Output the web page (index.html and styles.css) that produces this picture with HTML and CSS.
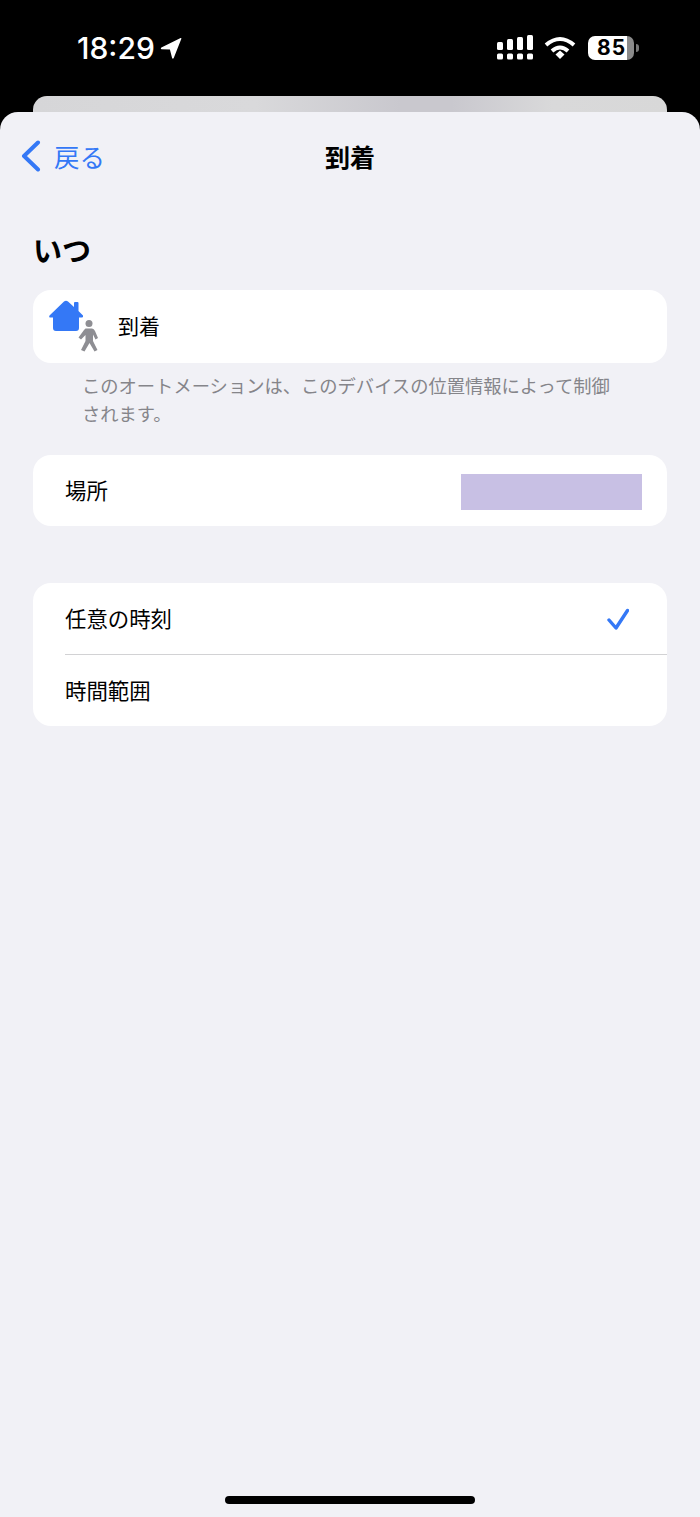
FILE: index.html
```html
<!DOCTYPE html>
<html lang="ja">
<head>
    <meta charset="UTF-8">
    <meta name="viewport" content="width=device-width, initial-scale=1.0">
    <title>到着</title>
    <link rel="stylesheet" href="styles.css">
</head>
<body>
    <!-- Status bar -->
    <div class="status-bar">
        <div class="status-left">
            <span class="clock">18:29</span>
            <svg class="arrow" width="22" height="22" viewBox="0 0 24 24"><path d="M1.5 11.5 L22.5 1.2 Q23.6 .8 23.3 2 L15 23 Q14 24.3 13.2 23 L10.8 13.6 L1.8 13.4 Q.2 12.6 1.5 11.5Z" fill="#fff"/></svg>
        </div>
        <div class="status-right">
            <svg class="signal" width="36" height="25" viewBox="0 0 36 25" fill="#fff">
                <rect x="0" y="7" width="6" height="8" rx="1.5"/>
                <rect x="10" y="4" width="6" height="11" rx="1.5"/>
                <rect x="20" y="2" width="6" height="13" rx="1.5"/>
                <rect x="30" y="0" width="6" height="15" rx="1.5"/>
                <rect x="0" y="18.500" width="6" height="6" rx="1.5"/>
                <rect x="10" y="18.500" width="6" height="6" rx="1.5"/>
                <rect x="20" y="18.500" width="6" height="6" rx="1.5"/>
                <rect x="30" y="18.500" width="6" height="6" rx="1.5"/>
            </svg>
            <svg class="wifi" width="32" height="24" viewBox="0 0 32 24" fill="none" stroke="#fff" stroke-width="4">
                <path d="M2 9 Q16 -3 30 9"/>
                <path d="M8 15 Q16 8 24 15"/>
                <path d="M11.500 18.500 L16 14.500 L20.500 18.500 L16 23Z" fill="#fff" stroke="none"/>
            </svg>
            <div class="battery">
                <div class="battery-body">85</div>
                <div class="battery-tip"></div>
            </div>
        </div>
    </div>

    <div class="sheet-behind"></div>

    <div class="sheet">
        <div class="nav">
            <a class="back">
                <svg width="20" height="32" viewBox="0 0 20 32" fill="none" stroke="#3478f6" stroke-width="4" stroke-linecap="round" stroke-linejoin="round"><path d="M17 2.500 L3 16 L17 29.500"/></svg>
                <span>戻る</span>
            </a>
            <div class="nav-title">到着</div>
        </div>

        <h2 class="section-title">いつ</h2>

        <div class="card arrive-row">
            <svg class="arrive-icon" width="52" height="56" viewBox="0 0 52 56">
                <path d="M1.5 17.500 L16 3.500 Q18 2 20 3.500 L26 9 L26 5 Q26 4 27 4 L29.500 4 Q30.500 4 30.500 5 L30.500 13 L35 17.500 Q35.500 20 33.500 19.500 L31 19.500 L31 30 Q31 33 28 33 L8 33 Q5 33 5 30 L5 19.500 L2.500 19.500 Q.5 19.500 1.500 17.500Z" fill="#3478f6"/>
                <circle cx="41" cy="25.500" r="3.500" fill="#8e8e93"/>
                <path d="M37.500 30.500 L44 30.500 Q46 30.500 47 33 L50 40 L47.500 41.500 L45 36.500 L45 43 L49.500 52 L46.500 53.500 L41.500 45 L36.500 53.500 L33 52 L37.500 43 L37.500 37 L33 41.500 L30.500 39.500 L36 32Z" fill="#8e8e93"/>
            </svg>
            <span>到着</span>
        </div>
        <p class="note">このオートメーションは、このデバイスの位置情報によって制御されます。</p>

        <div class="card row place-row">
            <span>場所</span>
            <div class="redacted"></div>
        </div>

        <div class="card time-card">
            <div class="row time-row">
                <span>任意の時刻</span>
                <svg class="check" width="22" height="22" viewBox="0 0 22 22" fill="none" stroke="#3478f6" stroke-width="3.400" stroke-linecap="round" stroke-linejoin="round"><path d="M2 12 L9 20 L20.500 2.500"/></svg>
            </div>
            <div class="row time-row last">
                <span>時間範囲</span>
            </div>
        </div>

        <div class="home-indicator"></div>
    </div>
</body>
</html>
```

FILE: styles.css
```css
* {
    box-sizing: border-box;
}

html, body {
    margin: 0;
    padding: 0;
}

body {
    width: 700px;
    height: 1517px;
    background-color: #000;
    font-family: "Noto Sans CJK JP", "Liberation Sans", sans-serif;
    color: #000;
    overflow: hidden;
}

.status-bar {
    height: 96px;
    display: flex;
    justify-content: space-between;
    align-items: flex-start;
    padding: 30px 61px 0 77px;
}

.status-left {
    display: flex;
    align-items: center;
    gap: 5px;
}

.clock {
    font-family: Inter, "Liberation Sans", sans-serif;
    font-size: 30px;
    line-height: 36px;
    font-weight: 500;
    color: #fff;
}

.status-right {
    display: flex;
    align-items: center;
    gap: 12px;
    padding-top: 5px;
}

.signal {
    margin-right: -1px;
}

.battery {
    display: flex;
    align-items: center;
    gap: 2px;
}

.battery-body {
    width: 46px;
    height: 24px;
    border-radius: 7px;
    background: linear-gradient(to right, #fff 84%, #8a8a8a 84%);
    color: #000;
    font-family: Inter, "Liberation Sans", sans-serif;
    font-size: 21px;
    font-weight: 700;
    letter-spacing: 1px;
    line-height: 24px;
    padding-left: 9px;
}

.battery-tip {
    width: 3px;
    height: 8px;
    border-radius: 0 3px 3px 0;
    background-color: #777;
}

.sheet-behind {
    height: 16px;
    margin: 0 33px;
    border-radius: 14px 14px 0 0;
    background: linear-gradient(to right, #d6d6d8, #d9d9db 35%, #c9c8ce 58%, #c9c8ce 66%, #d9d9da 82%, #d8d8d8);
}

.sheet {
    height: 1405px;
    background-color: #f1f1f6;
    border-radius: 18px 18px 0 0;
    padding: 0 33px;
    position: relative;
}

.nav {
    height: 88px;
    display: flex;
    align-items: center;
    justify-content: center;
}

.back {
    position: absolute;
    left: 21px;
    top: 25px;
    display: flex;
    align-items: center;
    gap: 13px;
    color: #3478f6;
    font-size: 25.500px;
}

.nav-title {
    font-size: 25px;
    font-weight: 700;
}

.section-title {
    margin: 0;
    padding-top: 27px;
    height: 90px;
    font-size: 29px;
    font-weight: 700;
    line-height: 44px;
}

.card {
    background-color: #fff;
    border-radius: 18px;
}

.arrive-row {
    height: 73px;
    position: relative;
    display: flex;
    align-items: center;
    padding: 0 0 4px 85px;
    font-size: 21px;
}

.arrive-icon {
    position: absolute;
    left: 15px;
    top: 8px;
}

.note {
    margin: 0;
    padding: 8px 50px 0;
    height: 92px;
    font-size: 18.300px;
    line-height: 28px;
    color: #85858a;
    margin-left: -1px;
}

.row {
    display: flex;
    align-items: center;
    justify-content: space-between;
    font-size: 21.400px;
}

.place-row {
    height: 71px;
    padding: 0 25px 0 33px;
}

.place-row span {
    margin: 0 0 3px -1px;
}

.redacted {
    width: 181px;
    height: 36px;
    margin-top: 3px;
    background-color: #c8c0e4;
}

.time-card {
    margin-top: 57px;
    height: 143px;
}

.time-row {
    height: 72px;
    margin-left: 32px;
    padding-right: 38px;
    border-bottom: 1px solid #d2d2d4;
}

.time-row span {
    margin-bottom: 2px;
}

.time-row.last {
    height: 71px;
    border-bottom: none;
}

.home-indicator {
    position: absolute;
    left: 225px;
    bottom: 13px;
    width: 250px;
    height: 8px;
    border-radius: 4px;
    background-color: #000;
}
```
